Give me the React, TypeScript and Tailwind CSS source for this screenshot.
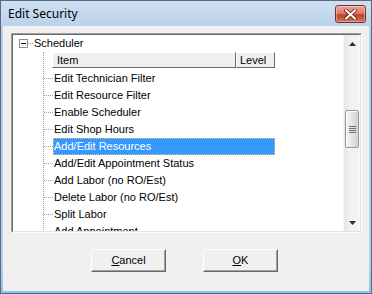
import React from "react";

const rows = [
  "Edit Technician Filter",
  "Edit Resource Filter",
  "Enable Scheduler",
  "Edit Shop Hours",
  "Add/Edit Resources",
  "Add/Edit Appointment Status",
  "Add Labor (no RO/Est)",
  "Delete Labor (no RO/Est)",
  "Split Labor",
  "Add Appointment",
];

function CloseButton() {
  return (
    <div className="w-[31px] h-[18px] mt-[1px] rounded-[3px] border border-[#7a2f24] bg-[linear-gradient(#eaa698,#d97a6a_45%,#c4402c_55%,#d0735e)] flex items-center justify-center shadow-[inset_0_0_0_1px_rgba(255,255,255,0.35)]">
      <svg width="13" height="11" viewBox="0 0 13 11">
        <path d="M2 1.5 L11 9.5 M11 1.5 L2 9.5" stroke="#5a1c14" strokeWidth="3.6" strokeLinecap="square" />
        <path d="M2 1.5 L11 9.5 M11 1.5 L2 9.5" stroke="#ffffff" strokeWidth="2" strokeLinecap="square" />
      </svg>
    </div>
  );
}

function Scrollbar() {
  return (
    <div className="w-[17px] h-full flex flex-col bg-[linear-gradient(90deg,#e6e6e6,#f2f2f2_40%,#f2f2f2_85%,#fafafa)] border-l border-[#f7f7f7]">
      <div className="h-[17px] flex items-center justify-center shrink-0">
        <svg width="7" height="4" viewBox="0 0 7 4">
          <path d="M0 4 L3.5 0 L7 4 Z" fill="#303030" />
        </svg>
      </div>
      <div className="flex-1 flex flex-col">
        <div className="h-[58px] shrink-0" />
        <div className="h-[38px] mx-[1px] rounded-[2px] border border-[#979797] bg-[linear-gradient(90deg,#f5f5f5,#e6e6e6_50%,#d0d0d0)] flex flex-col items-center justify-center gap-[1px] shadow-[inset_1px_1px_0_#fdfdfd]">
          <div className="w-[7px] h-[1px] bg-[#6f6f6f]" />
          <div className="w-[7px] h-[1px] bg-[#6f6f6f]" />
          <div className="w-[7px] h-[1px] bg-[#6f6f6f]" />
          <div className="w-[7px] h-[1px] bg-[#6f6f6f]" />
        </div>
      </div>
      <div className="h-[17px] flex items-center justify-center shrink-0">
        <svg width="7" height="4" viewBox="0 0 7 4">
          <path d="M0 0 L7 0 L3.5 4 Z" fill="#303030" />
        </svg>
      </div>
    </div>
  );
}

function Btn({ label }: { label: React.ReactNode }) {
  return (
    <div className="w-[75px] h-[23px] border border-t-white border-l-white border-r-[#696969] border-b-[#696969]">
      <div className="w-full h-full border border-t-[#f0f0f0] border-l-[#f0f0f0] border-r-[#a0a0a0] border-b-[#a0a0a0] bg-[#f0f0f0] flex items-center justify-center text-[11px] text-black">
        {label}
      </div>
    </div>
  );
}

export default function App() {
  return (
    <div
      className="w-[372px] h-[294px] flex flex-col border border-[#586b80] bg-[linear-gradient(#cfe0f2,#b9d1ea_26px,#b9d1ea_260px,#8ec2ec)] px-[2px] pb-[2px] overflow-hidden"
      style={{ fontFamily: '"Liberation Sans", Arial, sans-serif' }}
    >
      <div className="h-[25px] shrink-0 flex items-center justify-between pl-[5px] pr-[3px]">
        <span className="text-[12px] text-black" style={{ fontFamily: '"Noto Sans", "Open Sans", sans-serif' }}>
          Edit Security
        </span>
        <CloseButton />
      </div>
      <div className="flex-1 bg-[#f0f0f0] flex flex-col">
        <div className="mt-[7px] ml-[8px] w-[351px] h-[200px] border border-t-[#a0a0a0] border-l-[#a0a0a0] border-r-white border-b-white">
          <div className="w-full h-full border border-t-[#696969] border-l-[#696969] border-r-[#e3e3e3] border-b-[#e3e3e3] bg-white flex">
            <div className="flex-1 overflow-hidden flex flex-col text-[11px] text-black">
              <div className="h-[17px] shrink-0 flex items-center pl-[6px]">
                <div className="w-[9px] h-[9px] border border-[#919191] bg-white flex items-center justify-center">
                  <div className="w-[5px] h-[1px] bg-black" />
                </div>
                <div className="w-[5px] border-t border-dotted border-[#a0a0a0]" />
                <span className="pl-[1px]">Scheduler</span>
              </div>
              <div className="ml-[30px] border-l border-dotted border-[#a0a0a0] flex flex-col flex-1">
                <div className="h-[16px] mb-[2px] shrink-0 flex pl-[8px]">
                  <div className="w-[184px] h-full border border-t-white border-l-white border-r-[#696969] border-b-[#696969] bg-[#f0f0f0] flex items-center pl-[4px]">
                    Item
                  </div>
                  <div className="w-[39px] h-full border border-t-white border-l-white border-r-[#696969] border-b-[#696969] bg-[#f0f0f0] flex items-center pl-[3px]">
                    Level
                  </div>
                </div>
                {rows.map((r, i) => (
                  <div key={r} className="h-[17px] shrink-0 flex items-center">
                    <div className="w-[9px] border-t border-dotted border-[#a0a0a0]" />
                    <div
                      className={
                        i === 4
                          ? "w-[222px] h-full flex items-center pl-[1px] bg-[#3399ff] text-white outline outline-1 outline-dotted outline-[#f0c070] -outline-offset-1"
                          : "w-[222px] h-full flex items-center pl-[1px]"
                      }
                    >
                      {r}
                    </div>
                  </div>
                ))}
              </div>
            </div>
            <Scrollbar />
          </div>
        </div>
        <div className="mt-[16px] ml-[88px] flex gap-[37px]">
          <Btn label={<span><span className="underline">C</span>ancel</span>} />
          <Btn label={<span><span className="underline">O</span>K</span>} />
        </div>
      </div>
    </div>
  );
}
